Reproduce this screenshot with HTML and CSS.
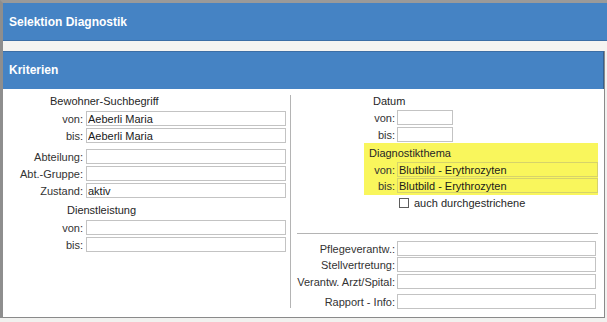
FILE: index.html
```html
<!DOCTYPE html>
<html lang="de">
<head>
  <meta charset="UTF-8">
  <title>Selektion Diagnostik</title>
  <link rel="stylesheet" href="styles.css">
</head>
<body>
  <div class="window">
    <div class="titlebar">Selektion Diagnostik</div>
    <div class="band"></div>
    <div class="section">
      <div class="section-head">Kriterien</div>
      <div class="panel">
        <div class="col-left">
          <div class="group-title first">Bewohner-Suchbegriff</div>
          <div class="field"><label>von:</label><input type="text" value="Aeberli Maria"></div>
          <div class="field"><label>bis:</label><input type="text" value="Aeberli Maria"></div>
          <div class="field spaced"><label>Abteilung:</label><input type="text"></div>
          <div class="field"><label>Abt.-Gruppe:</label><input type="text"></div>
          <div class="field"><label>Zustand:</label><input type="text" value="aktiv"></div>
          <div class="group-title service">Dienstleistung</div>
          <div class="field"><label>von:</label><input type="text"></div>
          <div class="field"><label>bis:</label><input type="text"></div>
        </div>

        <div class="divider"></div>

        <div class="col-right">
          <div class="group-title date">Datum</div>
          <div class="field"><label>von:</label><input type="text" class="short"></div>
          <div class="field"><label>bis:</label><input type="text" class="short"></div>

          <div class="highlight">
            <div class="highlight-title">Diagnostikthema</div>
            <div class="hl-field first"><label>von:</label><input type="text" value="Blutbild - Erythrozyten"></div>
            <div class="hl-field"><label>bis:</label><input type="text" value="Blutbild - Erythrozyten"></div>
          </div>

          <div class="check-row">
            <input type="checkbox" class="check">
            <span>auch durchgestrichene</span>
          </div>

          <div class="separator"></div>

          <div class="field wide first-wide"><label>Pflegeverantw.:</label><input type="text"></div>
          <div class="field wide tight"><label>Stellvertretung:</label><input type="text"></div>
          <div class="field wide"><label>Verantw. Arzt/Spital:</label><input type="text"></div>
          <div class="field wide report"><label>Rapport - Info:</label><input type="text"></div>
        </div>
      </div>
    </div>
  </div>
</body>
</html>
```

FILE: styles.css
```css
* {
  box-sizing: border-box;
}
body {
  margin: 0;
  background-color: #f1f1ef;
  font-family: "Liberation Sans", Arial, sans-serif;
  font-size: 11px;
  color: #262626;
}
.window {
  width: 607px;
  border-left: 3px solid #8e8e8e;
  border-top: 3px solid #9a9a9a;
}
.titlebar {
  height: 38px;
  line-height: 38px;
  padding-left: 6px;
  background-color: #4583c4;
  color: #fff;
  font-weight: bold;
  font-size: 12px;
  border-bottom: 1px solid #3c6ea5;
}
.band {
  height: 10px;
  background-color: #f5f4f1;
}
.section {
  margin-right: 2px;
  border-right: 1px solid #8a8a8a;
  border-bottom: 1px solid #8a8a8a;
}
.section-head {
  height: 38px;
  line-height: 37px;
  padding-left: 6px;
  background-color: #4583c4;
  color: #fff;
  font-weight: bold;
  font-size: 12px;
  border-top: 1px solid #3c6ea5;
  border-right: 1px solid #365f8e;
}
.panel {
  height: 228px;
  background-color: #fff;
  display: flex;
}
.col-left {
  width: 287px;
  padding-top: 5px;
}
.divider {
  width: 1px;
  background-color: #b4b4b4;
  margin: 6px 0 9px;
}
.col-right {
  flex: 1;
  padding-top: 5px;
  padding-right: 6px;
}
.group-title {
  height: 14px;
  line-height: 14px;
}
.group-title.first {
  padding-left: 47px;
}
.group-title.service {
  margin-top: 5px;
  padding-left: 64px;
}
.group-title.date {
  padding-left: 82px;
}
.field {
  display: flex;
  align-items: center;
  height: 15px;
  margin-top: 2px;
}
.group-title + .field {
  margin-top: 3px;
}
.col-right .group-title + .field {
  margin-top: 2px;
}
.field.spaced {
  margin-top: 6px;
}
.field label {
  width: 81px;
  padding-right: 1px;
  text-align: right;
  color: #333;
  white-space: nowrap;
}
.field input {
  margin-left: 2px;
}
input[type="text"] {
  width: 200px;
  height: 15px;
  padding: 0 1px;
  border: 1px solid #c3c3c3;
  font-family: "Liberation Sans", Arial, sans-serif;
  font-size: 11px;
  color: #1a1a1a;
  background-color: #fff;
}
.col-right .field label {
  width: 105px;
}
.col-right .field input {
  margin-left: 1px;
}
input.short {
  width: 56px;
}
.highlight {
  margin-left: 73px;
  margin-top: 1px;
  padding: 3px 0 2px;
  background-color: #f9f65c;
}
.highlight-title {
  height: 14px;
  line-height: 14px;
  padding-left: 5px;
}
.hl-field {
  display: flex;
  align-items: center;
  height: 15px;
  margin-top: 1px;
}
.hl-field.first {
  margin-top: 2px;
}
.hl-field label {
  width: 32px;
  text-align: right;
  padding-right: 1px;
  color: #333;
}
.hl-field input {
  flex: 1;
  margin-left: 1px;
  background-color: #f9f65c;
  border-color: #d6d36a;
}
.check-row {
  display: flex;
  align-items: center;
  height: 12px;
  margin-top: 2px;
  padding-left: 108px;
}
.check {
  appearance: none;
  -webkit-appearance: none;
  width: 10px;
  height: 10px;
  margin: 0 5px 0 0;
  border: 1px solid #5c5c5c;
  background-color: #fff;
}
.separator {
  height: 1px;
  margin: 24px 0 0 6px;
  background-color: #b4b4b4;
}
.field.first-wide {
  margin-top: 7px;
}
.field.tight {
  margin-top: 1px;
}
.field.report {
  margin-top: 5px;
}
.field.wide input {
  width: 199px;
}
```
